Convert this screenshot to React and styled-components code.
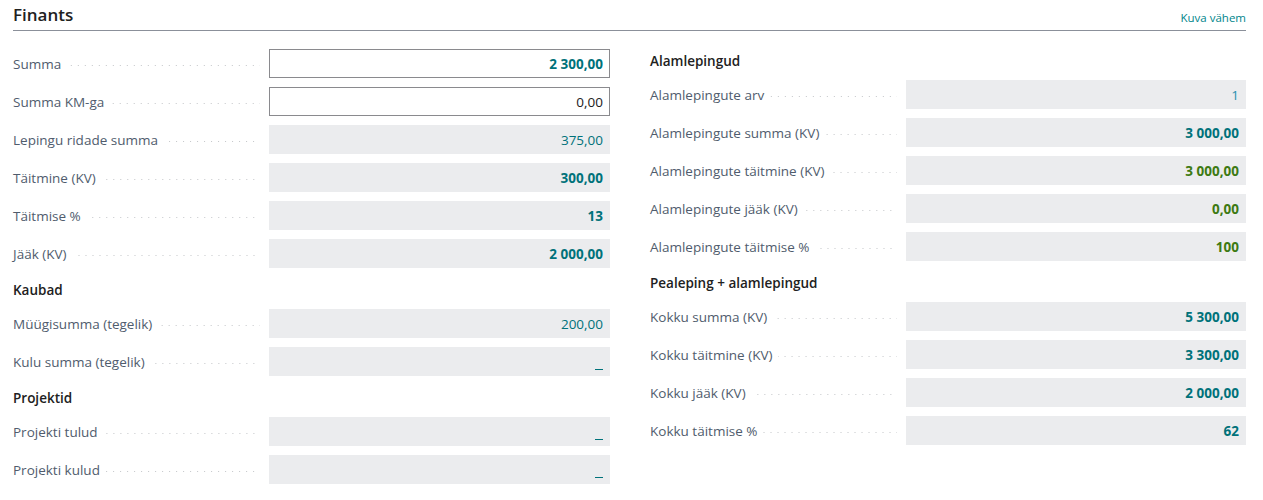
import styled, { createGlobalStyle } from "styled-components";

const GlobalStyle = createGlobalStyle`
  body {
    margin: 0;
    background: #fff;
    font-family: "Open Sans", "Noto Sans", sans-serif;
  }
`

const left = [
  { type: 'row', label: 'Summa', value: '2 300,00', edit: true, tone: 'teal', bold: true },
  { type: 'row', label: 'Summa KM-ga', value: '0,00', edit: true, tone: 'plain' },
  { type: 'row', label: 'Lepingu ridade summa', value: '375,00', tone: 'teal' },
  { type: 'row', label: 'Täitmine (KV)', value: '300,00', tone: 'teal', bold: true },
  { type: 'row', label: 'Täitmise %', value: '13', tone: 'teal', bold: true },
  { type: 'row', label: 'Jääk (KV)', value: '2 000,00', tone: 'teal', bold: true },
  { type: 'head', label: 'Kaubad' },
  { type: 'row', label: 'Müügisumma (tegelik)', value: '200,00', tone: 'teal' },
  { type: 'row', label: 'Kulu summa (tegelik)', value: '_', tone: 'teal' },
  { type: 'head', label: 'Projektid' },
  { type: 'row', label: 'Projekti tulud', value: '_', tone: 'teal' },
  { type: 'row', label: 'Projekti kulud', value: '_', tone: 'teal' },
]

const right = [
  { type: 'head', label: 'Alamlepingud' },
  { type: 'row', label: 'Alamlepingute arv', value: '1', tone: 'blue' },
  { type: 'row', label: 'Alamlepingute summa (KV)', value: '3 000,00', tone: 'teal', bold: true },
  { type: 'row', label: 'Alamlepingute täitmine (KV)', value: '3 000,00', tone: 'green', bold: true },
  { type: 'row', label: 'Alamlepingute jääk (KV)', value: '0,00', tone: 'green', bold: true },
  { type: 'row', label: 'Alamlepingute täitmise %', value: '100', tone: 'green', bold: true },
  { type: 'head', label: 'Pealeping + alamlepingud' },
  { type: 'row', label: 'Kokku summa (KV)', value: '5 300,00', tone: 'teal', bold: true },
  { type: 'row', label: 'Kokku täitmine (KV)', value: '3 300,00', tone: 'teal', bold: true },
  { type: 'row', label: 'Kokku jääk (KV)', value: '2 000,00', tone: 'teal', bold: true },
  { type: 'row', label: 'Kokku täitmise %', value: '62', tone: 'teal', bold: true },
]

function Column({ items }) {
  return (
    <Col>
      {items.map((it, i) =>
        it.type === 'head' ? (
          <GroupHead key={i}>{it.label}</GroupHead>
        ) : (
          <Row key={i}>
            <LabelCell>
              <LabelText>{it.label}</LabelText>
              <Leader />
            </LabelCell>
            <Field $edit={it.edit} $tone={it.tone} $bold={it.bold}>
              {it.value === '_' ? <Dash /> : it.value}
            </Field>
          </Row>
        )
      )}
    </Col>
  )
}

function App() {
  return (
    <Page>
      <GlobalStyle />
      <Header>
        <Title>Finants</Title>
        <ShowLess>Kuva vähem</ShowLess>
      </Header>
      <Columns>
        <Column items={left} />
        <Column items={right} />
      </Columns>
    </Page>
  );
}

const tones = {
  teal: '#00727a',
  plain: '#212121',
  blue: '#2690b0',
  green: '#3d7a12',
}

const Page = styled.div`
  padding: 0 17px 0 13px;
`

const Header = styled.div`
  display: flex;
  justify-content: space-between;
  align-items: flex-end;
  height: 31px;
  border-bottom: 1px solid #8b909a;
  box-sizing: border-box;
`

const Title = styled.h2`
  margin: 0 0 4px;
  font-size: 17px;
  font-weight: 600;
  color: #212121;
  line-height: 22px;
`

const ShowLess = styled.a`
  font-size: 11.5px;
  color: #00858b;
  margin-bottom: 5px;
  cursor: pointer;
`

const Columns = styled.div`
  display: grid;
  grid-template-columns: 597px 596px;
  column-gap: 40px;
  padding-top: 18px;
`

const Col = styled.div`
  display: flex;
  flex-direction: column;
`

const GroupHead = styled.div`
  height: 31px;
  line-height: 24px;
  font-size: 13.5px;
  font-weight: 600;
  color: #212121;
  &:not(:first-child) {
    margin-top: 1px;
  }
`

const Row = styled.div`
  display: grid;
  grid-template-columns: 256px 1fr;
  height: 29px;
  margin-bottom: 9px;
`

const LabelCell = styled.div`
  display: flex;
  align-items: center;
  padding-right: 9px;
  min-width: 0;
`

const LabelText = styled.span`
  font-size: 13.5px;
  color: #505c6d;
  white-space: nowrap;
  padding-right: 6px;
`

const Leader = styled.span`
  flex: 1;
  height: 1px;
  margin-top: 4px;
  background-image: linear-gradient(to right, #c4c6c9 1px, transparent 1px);
  background-size: 7px 1px;
  background-repeat: repeat-x;
  background-position: right center;
`

const Field = styled.div`
  box-sizing: border-box;
  display: flex;
  align-items: center;
  justify-content: flex-end;
  padding: 0 6px 0 8px;
  font-size: 13.5px;
  font-weight: ${(p) => (p.$bold ? 700 : 400)};
  color: ${(p) => tones[p.$tone]};
  background: ${(p) => (p.$edit ? '#fff' : '#ebecee')};
  border: 1px solid ${(p) => (p.$edit ? '#8a8a8e' : 'transparent')};
`

const Dash = styled.span`
  display: inline-block;
  width: 8px;
  height: 1px;
  margin-top: 15px;
  background: #00727a;
`

export default App;
